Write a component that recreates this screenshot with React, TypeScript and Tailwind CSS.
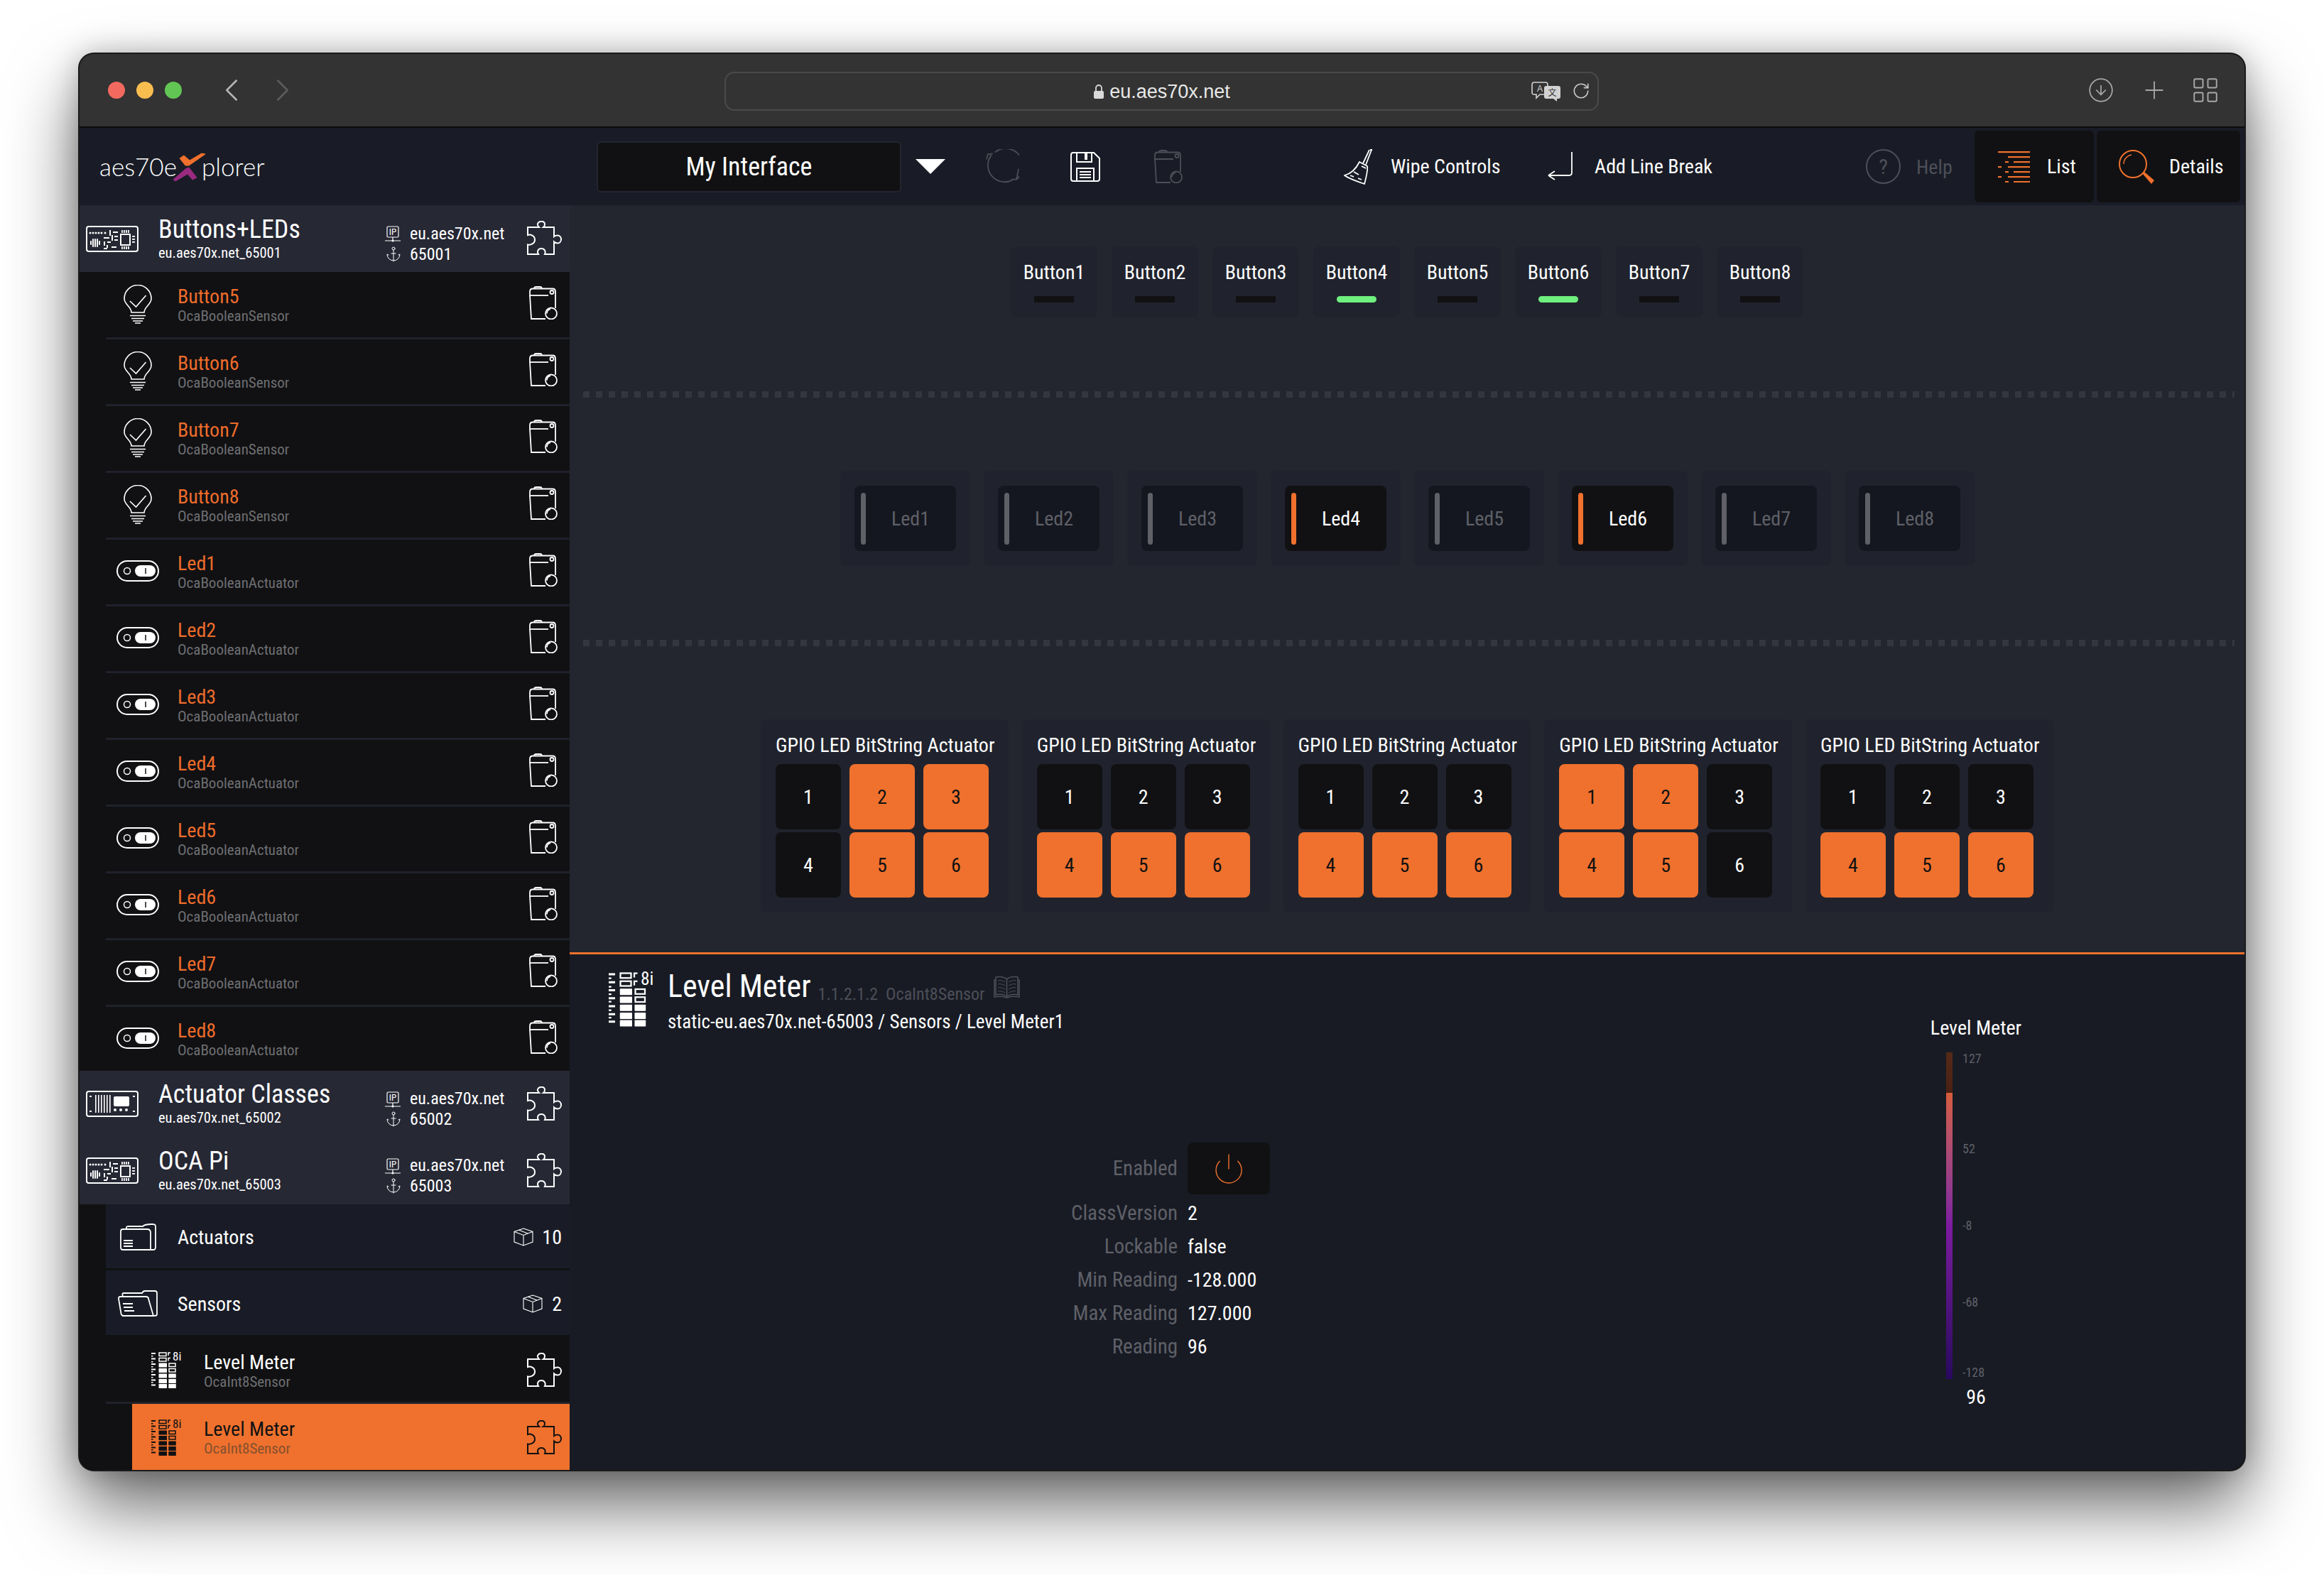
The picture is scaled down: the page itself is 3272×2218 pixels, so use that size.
import { ChevronLeft, ChevronRight, CircleArrowDown, Plus, LayoutGrid, RotateCw, Anchor, Power } from 'lucide-react';

const buttons = ['Button1', 'Button2', 'Button3', 'Button4', 'Button5', 'Button6', 'Button7', 'Button8'];
const leds = ['Led1', 'Led2', 'Led3', 'Led4', 'Led5', 'Led6', 'Led7', 'Led8'];
const gpio = [
  [false, true, true, false, true, true],
  [false, false, false, true, true, true],
  [false, false, false, true, true, true],
  [true, true, false, true, true, false],
  [false, false, false, true, true, true],
];
const rows = [
  { name: 'Button5', type: 'OcaBooleanSensor', kind: 'bulb' },
  { name: 'Button6', type: 'OcaBooleanSensor', kind: 'bulb' },
  { name: 'Button7', type: 'OcaBooleanSensor', kind: 'bulb' },
  { name: 'Button8', type: 'OcaBooleanSensor', kind: 'bulb' },
  { name: 'Led1', type: 'OcaBooleanActuator', kind: 'toggle' },
  { name: 'Led2', type: 'OcaBooleanActuator', kind: 'toggle' },
  { name: 'Led3', type: 'OcaBooleanActuator', kind: 'toggle' },
  { name: 'Led4', type: 'OcaBooleanActuator', kind: 'toggle' },
  { name: 'Led5', type: 'OcaBooleanActuator', kind: 'toggle' },
  { name: 'Led6', type: 'OcaBooleanActuator', kind: 'toggle' },
  { name: 'Led7', type: 'OcaBooleanActuator', kind: 'toggle' },
  { name: 'Led8', type: 'OcaBooleanActuator', kind: 'toggle' },
];
const detailProps = [
  ['ClassVersion', '2'],
  ['Lockable', 'false'],
  ['Min Reading', '-128.000'],
  ['Max Reading', '127.000'],
  ['Reading', '96'],
];
// short dash / long dash of the list tab icon, one entry per line
const listLines = [
  [[0, 45]],
  [[14, 45]],
  [[10, 15], [22, 45]],
  [[0, 5], [14, 45]],
  [[10, 15], [22, 45]],
  [[0, 5], [14, 45]],
  [[10, 15], [22, 45]],
];

function Puzzle({ className = 'text-white' }: { className?: string }) {
  return (
    <svg viewBox="0 0 49 48" className={`w-[49px] h-[48px] shrink-0 ${className}`} fill="none" stroke="currentColor" strokeWidth="2">
      <path d="M1 9H17C15 7 14.500 5.500 15 4C16 1.500 18 .8 20 .8C23 .8 25 2.500 25 5C25 6.500 24.500 8 23 9H38V22C39.500 20.500 41 20.500 43 20.500C46 20.500 48 23 48 26C48 29 46 31.500 43 31.500C41 31.500 39.500 31 38 29.500V47H25C26.500 44 25.500 39 20 39C15 39 14 44 16 47H1V33.500C5 34.500 11 32 11 26.500C11 21 5 18.500 1 20Z" />
    </svg>
  );
}

function Bin({ className = 'text-white' }: { className?: string }) {
  return (
    <svg viewBox="0 0 41 47" className={`w-[41px] h-[47px] shrink-0 ${className}`} fill="none" stroke="currentColor" strokeWidth="1.800">
      <path d="M8 3.500C8 1.500 9 1 11 1H16C18 1 19 1.500 19 3.500" />
      <path d="M2 12V8C2 5 3 3.500 6 3.500H34C37 3.500 38 5 38 8V31" />
      <circle cx="33" cy="8.500" r="2.500" />
      <path d="M1 13H28" />
      <path d="M2 13L4 46H24" />
      <circle cx="32" cy="38.500" r="8" />
      <path d="M26 38.500C26 35 28.500 32.500 31 32" />
    </svg>
  );
}

function Bulb() {
  return (
    <svg viewBox="0 0 40 55" className="w-[40px] h-[55px]" fill="none" stroke="white" strokeWidth="1.600">
      <path d="M11 39C11 31 1 28 1 19.500A19 19 0 0 1 39 19.500C39 28 29 31 29 39Z" />
      <path d="M9 23L17.500 31L31.500 15" />
      <path d="M9 43.500H31M11 47.500H29M13 51H27M16 54H24" />
    </svg>
  );
}

function Toggle() {
  return (
    <svg viewBox="0 0 60 30" className="w-[60px] h-[30px]" fill="none" stroke="white" strokeWidth="2">
      <rect x="1" y="1" width="58" height="28" rx="14" />
      <circle cx="15" cy="15" r="4.500" strokeWidth="1.500" />
      <rect x="26" y="7" width="29" height="16" rx="8" fill="white" stroke="none" />
      <path d="M41 11V19" stroke="#111113" strokeWidth="1.500" />
    </svg>
  );
}

function ChipIcon() {
  const top = [6, 10, 14, 18, 22, 27];
  return (
    <svg viewBox="0 0 74 37" className="w-[74px] h-[37px] shrink-0" fill="white">
      <rect x="1" y="1" width="72" height="35" rx="3" fill="none" stroke="white" strokeWidth="2" />
      {top.map(x => <circle key={x} cx={x} cy="10" r="1.500" />)}
      <rect x="33" y="6" width="2" height="8" />
      <rect x="38" y="8" width="7" height="2" />
      <rect x="25" y="16" width="8" height="2" />
      <rect x="36" y="13" width="2" height="8" />
      <rect x="40" y="14" width="5" height="2" />
      <rect x="40" y="19" width="5" height="2" />
      <rect x="49" y="12" width="13" height="15" fill="none" stroke="white" strokeWidth="2" />
      {[50, 53, 56, 59].map(x => <rect key={x} x={x} y="6" width="1.800" height="4" />)}
      {[50, 53, 56, 59].map(x => <rect key={x} x={x} y="29" width="1.800" height="4" />)}
      {[14, 18, 22].map(y => <rect key={y} x="65" y={y} width="4" height="1.800" />)}
      {[6, 9, 12, 15, 18].map((x, i) => <rect key={x} x={x} y={i % 4 === 0 ? 21 : 18} width="2" height={i % 4 === 0 ? 6 : 12} rx="1" />)}
      <rect x="25" y="22" width="2" height="6" />
      <rect x="30" y="22" width="5" height="2" />
      <rect x="29" y="27" width="2" height="4" />
      <rect x="25" y="31" width="5" height="2" />
      <rect x="36" y="29" width="7" height="2" />
    </svg>
  );
}

function RackIcon() {
  return (
    <svg viewBox="0 0 74 37" className="w-[74px] h-[37px] shrink-0" fill="white">
      <rect x="1" y="1" width="72" height="35" rx="3" fill="none" stroke="white" strokeWidth="2" />
      {[13, 17, 21, 25, 29, 33].map(x => <rect key={x} x={x} y="6" width="1.600" height="25" />)}
      <rect x="39" y="8" width="22" height="14" rx="2" />
      {[41, 49, 57].map(x => <circle key={x} cx={x} cy="27" r="2" />)}
      <rect x="5" y="7" width="3" height="2" />
      <rect x="5" y="28" width="3" height="2" />
      <rect x="66" y="7" width="3" height="2" />
      <rect x="66" y="28" width="3" height="2" />
    </svg>
  );
}

function IpIcon() {
  return (
    <svg viewBox="0 0 22 23" className="w-[22px] h-[23px] overflow-visible" fill="none" stroke="white" strokeWidth="1.200">
      <rect x="3" y="1" width="16" height="15" rx="1.500" />
      <text x="11" y="13" textAnchor="middle" fontSize="13" fill="white" stroke="none" fontFamily="Roboto Condensed">IP</text>
      <path d="M0 21H22M11 16V21" />
      <circle cx="11" cy="21" r="1.500" fill="white" stroke="none" />
    </svg>
  );
}

function LevelIcon({ className = 'w-[46px] h-[52px]', fill = 'white' }: { className?: string; fill?: string }) {
  const ys = [2, 9.500, 17, 24.500, 32, 39.500, 46.500];
  return (
    <svg viewBox="0 0 46 52" className={`shrink-0 overflow-visible ${className}`}>
      {ys.map(y => <rect key={y} x="0" y={y} width="6" height="2" fill={fill} />)}
      {[6, 14, 21, 28, 36, 43].map(y => <rect key={y} x="0" y={y} width="2.500" height="1.500" fill={fill} />)}
      {ys.map((y, i) => i < 2
        ? <rect key={y} x="11" y={y} width="10" height="4.500" fill="none" stroke={fill} strokeWidth="1.500" />
        : <rect key={y} x="10.500" y={y - .5} width="11.500" height="6" rx=".5" fill={fill} />)}
      {ys.map((y, i) => {
        if (i < 2) return <path key={y} d={`M27 ${y}H24V${y + 4}`} fill="none" stroke={fill} strokeWidth="1.500" />;
        if (i < 4) return <rect key={y} x="25" y={y} width="9" height="4.500" fill="none" stroke={fill} strokeWidth="1.500" />;
        return <rect key={y} x="24.300" y={y - .5} width="10.500" height="6" rx=".5" fill={fill} />;
      })}
      <text x="30" y="13" fontSize="17" fill={fill} fontFamily="Roboto Condensed">8i</text>
    </svg>
  );
}

function Folder({ open }: { open?: boolean }) {
  if (open) {
    return (
      <svg viewBox="0 0 56 38" className="w-[56px] h-[38px]" fill="none" stroke="white" strokeWidth="1.800">
        <path d="M6 36H51C53 36 55 36 55 34V4C55 2 54 1 52 1H38C36 1 35 2 34 4H8C6 4 6 6 7 8" />
        <path d="M3 9H39C41 9 43 10 43 12L50 36H8C6 36 5 35 4.500 33L1 12C1 10 2 9 3 9Z" />
        <path d="M7 19H21M8 24H21M9 29H23" />
      </svg>
    );
  }
  return (
    <svg viewBox="0 0 51 38" className="w-[51px] h-[38px]" fill="none" stroke="white" strokeWidth="1.800">
      <path d="M4 8H38C41 8 43 10 43 13V37H4C2 37 1 36 1 34V11C1 9 2 8 4 8Z" />
      <path d="M9 7V6C9 4 10 4 12 4H32C34 2 38 1 44 1C47 1 50 .5 50 4V33C50 35 50 37 47 37H43" />
      <path d="M5 24H18M5 28H18M5 32H18" />
    </svg>
  );
}

function Box() {
  return (
    <svg viewBox="0 0 28 26" className="w-[28px] h-[26px]" fill="none" stroke="white" strokeWidth="1.100">
      <path d="M14 1L27 5.500V20L14 25L1 20V5.500ZM1 5.500L14 10.500L27 5.500M14 10.500V25M7 3L20 8" />
    </svg>
  );
}

function DeviceHeader({ name, id, port, icon }: { name: string; id: string; port: string; icon: 'chip' | 'rack' }) {
  return (
    <div className="h-[94px] bg-[#262834] flex items-center pl-[9px] pr-[11px] text-white">
      {icon === 'chip' ? <ChipIcon /> : <RackIcon />}
      <div className="ml-[28px] w-[319px]">
        <div className="text-[36px] leading-[38px]">{name}</div>
        <div className="text-[20.500px] leading-[26px] mt-[1px]">{id}</div>
      </div>
      <div className="w-[200px] flex flex-col mt-[14px]">
        <div className="flex items-center h-[29px]">
          <div className="w-[35px] pt-[2px]"><IpIcon /></div>
          <span className="text-[24px]">eu.aes70x.net</span>
        </div>
        <div className="flex items-center h-[29px]">
          <Anchor className="w-[24px] h-[24px] mr-[11px]" strokeWidth={1} />
          <span className="text-[24px]">{port}</span>
        </div>
      </div>
      <div className="ml-auto mb-[2px]"><Puzzle /></div>
    </div>
  );
}

function Sidebar() {
  return (
    <div className="w-[690px] shrink-0 flex flex-col bg-[#111113]">
      <div className="h-[95px]"><DeviceHeader name="Buttons+LEDs" id="eu.aes70x.net_65001" port="65001" icon="chip" /></div>
      <div className="h-[1123.500px] overflow-hidden pl-[37px] flex flex-col">
        {rows.map(r => (
          <div key={r.name} className="h-[94px] shrink-0 flex items-center border-b-[3px] border-[#1f212b]">
            <div className="w-[90px] flex justify-center pb-[3px]">{r.kind === 'bulb' ? <Bulb /> : <Toggle />}</div>
            <div className="ml-[11px] flex-1 pt-[2px]">
              <div className="text-[28px] leading-[30px] text-[#ee6c2b]">{r.name}</div>
              <div className="text-[21px] leading-[25px] text-[#6e6f72]">{r.type}</div>
            </div>
            <div className="pr-[17px] pb-[6px]"><Bin /></div>
          </div>
        ))}
      </div>
      <DeviceHeader name="Actuator Classes" id="eu.aes70x.net_65002" port="65002" icon="rack" />
      <DeviceHeader name="OCA Pi" id="eu.aes70x.net_65003" port="65003" icon="chip" />
      <div className="pl-[37px] flex flex-col flex-1">
        <div className="h-[93.500px] bg-[#191c26] shadow-[inset_0_-3px_0_#111113] flex items-center text-white">
          <div className="w-[90px] flex justify-center"><Folder /></div>
          <span className="ml-[11px] text-[28px] flex-1 pt-[2px]">Actuators</span>
          <Box />
          <span className="ml-[12px] mr-[11px] text-[28px] pt-[2px]">10</span>
        </div>
        <div className="h-[94px] bg-[#191c26] shadow-[inset_0_-3px_0_#111113] flex items-center text-white">
          <div className="w-[90px] flex justify-center"><Folder open /></div>
          <span className="ml-[11px] text-[28px] flex-1 pt-[2px]">Sensors</span>
          <Box />
          <span className="ml-[13px] mr-[11px] text-[28px] pt-[2px]">2</span>
        </div>
        <div className="h-[94px] border-b-[3px] border-[#1f212b] flex items-center text-white pl-[64px] pr-[11px]">
          <LevelIcon />
          <div className="ml-[28px] flex-1 pt-[5px]">
            <div className="text-[28px] leading-[30px]">Level Meter</div>
            <div className="text-[21px] leading-[25px] text-[#6e6f72]">OcaInt8Sensor</div>
          </div>
          <Puzzle />
        </div>
        <div className="flex-1 ml-[37px] bg-[#ef712d] flex items-center pl-[27px] pr-[11px] text-[#111113]">
          <LevelIcon fill="#111113" />
          <div className="ml-[28px] flex-1 pt-[3px]">
            <div className="text-[28px] leading-[30px]">Level Meter</div>
            <div className="text-[21px] leading-[25px] text-[#85502f]">OcaInt8Sensor</div>
          </div>
          <Puzzle className="text-[#111113]" />
        </div>
      </div>
    </div>
  );
}

function Dots() {
  return (
    <div className="ml-[19px] mr-[14px] h-[9px] bg-[repeating-linear-gradient(90deg,#34363f_0,#34363f_9px,transparent_9px,transparent_18px)]" />
  );
}

function Workspace() {
  return (
    <div className="h-[1052px] shrink-0 bg-[#23262f] pt-[58px] flex flex-col">
      <div className="flex justify-center gap-[20px]">
        {buttons.map((b, i) => (
          <div key={b} className="w-[122px] h-[100px] rounded-[8px] bg-[#20232d] flex flex-col items-center pt-[22px]">
            <span className="text-[28px] leading-[30px] text-white">{b}</span>
            <div className={`mt-[18px] w-[56px] h-[9px] ${i === 3 || i === 5 ? 'bg-[#6ff07f] rounded-full' : 'bg-[#111113]'}`} />
          </div>
        ))}
      </div>
      <div className="mt-[104px]"><Dots /></div>
      <div className="mt-[103px] flex justify-center gap-[19px]">
        {leds.map((l, i) => {
          const on = i === 3 || i === 5;
          return (
            <div key={l} className="w-[183px] h-[134px] rounded-[8px] bg-[#20232d] flex items-center justify-center">
              <div className={`w-[143px] h-[92px] rounded-[8px] flex items-center pl-[9px] ${on ? 'bg-[#111113]' : 'bg-[#14171f]'}`}>
                <div className={`w-[7px] h-[73px] rounded-full ${on ? 'bg-[#ef712d]' : 'bg-[#5f6068]'}`} />
                <span className={`flex-1 text-center text-[28px] pt-[2px] ${on ? 'text-white' : 'text-[#5f6068]'}`}>{l}</span>
              </div>
            </div>
          );
        })}
      </div>
      <div className="mt-[104px]"><Dots /></div>
      <div className="mt-[103px] flex justify-center gap-[18.750px]">
        {gpio.map((bits, n) => (
          <div key={n} className="w-[349px] h-[272px] rounded-[8px] bg-[#20232d] pl-[21px] pt-[22px]">
            <div className="text-[28px] leading-[30px] whitespace-nowrap text-white">GPIO LED BitString Actuator</div>
            <div className="mt-[11px] grid grid-cols-[92px_92px_92px] auto-rows-[92px] gap-x-[12px] gap-y-[4px]">
              {bits.map((on, i) => (
                <div key={i} className={`rounded-[8px] flex items-center justify-center text-[28px] pt-[2px] ${on ? 'bg-[#ef712d] text-[#111113]' : 'bg-[#111113] text-white'}`}>{i + 1}</div>
              ))}
            </div>
          </div>
        ))}
      </div>
    </div>
  );
}

function Details() {
  return (
    <div className="flex-1 bg-[#181b24] border-t-[3px] border-[#ef712d] flex">
      <div className="flex-1 flex flex-col">
        <div className="pl-[55px] pt-[22px] flex text-white">
          <LevelIcon className="w-[69px] h-[81px]" />
          <div className="ml-[14px]">
            <div className="flex items-start">
              <span className="text-[44px] leading-[46px]">Level Meter</span>
              <span className="ml-[10px] mt-[19px] text-[24px] leading-[30px] text-[#4d4f58]">1.1.2.1.2&nbsp; OcaInt8Sensor</span>
              <svg viewBox="0 0 37 32" className="ml-[13px] mt-[8px] w-[37px] h-[32px]" fill="none" stroke="#4d4f58" strokeWidth="1.500">
                <path d="M18.500 5C14 1 8 1 3 2V27C8 26 14 26 18.500 29C23 26 29 26 34 27V2C29 1 23 1 18.500 5ZM18.500 5V29M3 6H1V30C8 29 14 29 18.500 31C23 29 29 29 36 30V6H34" />
                <path d="M6 7C9 6 12 7 16 9M6 12C9 11 12 12 16 14M6 17C9 16 12 17 16 19M6 22C9 21 12 22 16 24M31 7C28 6 25 7 21 9M31 12C28 11 25 12 21 14M31 17C28 16 25 17 21 19M31 22C28 21 25 22 21 24" strokeWidth="1" />
              </svg>
            </div>
            <div className="text-[27px] leading-[34px] mt-[7px]">static-eu.aes70x.net-65003 / Sensors / Level Meter1</div>
          </div>
        </div>
        <div className="mt-[153px] flex items-center gap-x-[14px]">
          <span className="w-[856px] text-right text-[29px] text-[#5f6068]">Enabled</span>
          <div className="w-[116px] h-[73px] rounded-[8px] bg-[#111113] flex items-center justify-center text-[#ef712d]">
            <Power className="w-[48px] h-[48px]" strokeWidth={0.7} />
          </div>
        </div>
        <div className="mt-[3px] flex flex-col">
          {detailProps.map(([k, v]) => (
            <div key={k} className="h-[47px] flex items-center gap-x-[14px]">
              <span className="w-[856px] text-right text-[29px] text-[#5f6068]">{k}</span>
              <span className="text-[28px] text-white">{v}</span>
            </div>
          ))}
        </div>
      </div>
      <div className="w-[200px] mr-[278px] pt-[89px] flex flex-col text-white">
        <div className="text-[28px] leading-[30px] text-center">Level Meter</div>
        <div className="mt-[19px] pl-[58px] flex">
          <div className="w-[9px] h-[460px] flex flex-col">
            <div className="h-[57px] bg-linear-to-b from-[#552a17] to-[#4a2114]" />
            <div className="flex-1 bg-linear-to-b from-[#d65c3a] via-[#7e1ba0] via-46% to-[#29085f]" />
          </div>
          <div className="ml-[14px] flex flex-col text-[18px] leading-[20px] text-[#5f6068]">
            <span className="mt-[-1px]">127</span>
            <span className="mt-[107px]">52</span>
            <span className="mt-[88px]">-8</span>
            <span className="mt-[88px]">-68</span>
            <span className="mt-[79px]">-128</span>
          </div>
        </div>
        <div className="mt-[10px] text-[28px] leading-[30px] text-center">96</div>
      </div>
    </div>
  );
}

function BrowserBar() {
  return (
    <div className="h-[104px] shrink-0 bg-[#333333] border-b-[2px] border-[#0c0c0c] flex items-center text-[#a8a8a8]">
      <div className="ml-[40px] flex gap-[16px]">
        <div className="w-[24px] h-[24px] rounded-full bg-[#f26a5f]" />
        <div className="w-[24px] h-[24px] rounded-full bg-[#f7bd4f]" />
        <div className="w-[24px] h-[24px] rounded-full bg-[#62c654]" />
      </div>
      <ChevronLeft className="ml-[43px] w-[54px] h-[54px] text-[#b5b5b5]" strokeWidth={1.100} />
      <ChevronRight className="ml-[18px] w-[54px] h-[54px] text-[#5d5d5d]" strokeWidth={1.100} />
      <div className="ml-[595px] w-[1231px] h-[55px] rounded-[14px] border-[2px] border-[#4a4a4a] flex items-center justify-center relative mt-[2px]">
        <svg viewBox="0 0 16 22" className="w-[16px] h-[22px] mr-[7px] mt-[2px]" fill="#d9d9d9">
          <path d="M4 10V6a4 4 0 0 1 8 0v4" fill="none" stroke="#d9d9d9" strokeWidth="1.800" />
          <rect x="1" y="10" width="14" height="11" rx="2" />
        </svg>
        <span className="font-['Liberation_Sans',sans-serif] text-[27px] text-[#e8e8e8] mt-[2px]">eu.aes70x.net</span>
        <svg viewBox="0 0 40 28" className="absolute right-[52px] top-[12px] w-[40px] h-[28px] overflow-visible">
          <path d="M3 1H19C21 1 22 2 22 4V15C22 17 21 18 19 18H11L6 23V18H3C1 18 0 17 0 15V4C0 2 1 1 3 1Z" fill="#333333" stroke="#d2d2d2" strokeWidth="1.600" />
          <text x="11" y="14" textAnchor="middle" fontSize="12" fill="#d2d2d2" fontFamily="Liberation Sans">A</text>
          <path d="M20 6H37C39 6 40 7 40 9V21C40 23 39 24 37 24H35V28L30 24H20C18 24 17 23 17 21V9C17 7 18 6 20 6Z" fill="#d2d2d2" />
          <text x="28.500" y="20" textAnchor="middle" fontSize="12" fill="#333333" fontFamily="Noto Sans CJK SC">文</text>
        </svg>
        <RotateCw className="absolute right-[10px] top-[12px] w-[26px] h-[26px] text-[#c8c8c8]" strokeWidth={1.500} />
      </div>
      <CircleArrowDown className="ml-[688px] w-[38px] h-[38px]" strokeWidth={1.100} />
      <Plus className="ml-[36px] w-[40px] h-[40px]" strokeWidth={1.100} />
      <LayoutGrid className="ml-[31px] w-[42px] h-[42px]" strokeWidth={1.100} />
    </div>
  );
}

function AppHeader() {
  return (
    <div className="h-[109px] shrink-0 bg-[#191c26] flex items-center text-white">
      <div className="ml-[28px] w-[230px] flex items-center font-['Lato',sans-serif] font-light text-[35px] leading-none">
        <span>aes70e</span>
        <svg viewBox="0 0 46 41" className="w-[46px] h-[41px] -ml-[5px] shrink-0 mt-[2px]">
          <path d="M9 8L15 4L23 11L40 1L45 2L22 18L17 18Z" fill="#ef712d" stroke="#ef712d" strokeLinejoin="round" />
          <path d="M0 38L17 23L22 21L33 35L27 38L20 30L3 40Z" fill="#9a2a80" stroke="#9a2a80" strokeLinejoin="round" />
        </svg>
        <span className="ml-[-6px] relative">plorer</span>
      </div>
      <div className="ml-[470px] w-[429px] h-[72px] rounded-[6px] bg-[#111113] border-[2px] border-[#23262f] flex items-center justify-center text-[36px]">My Interface</div>
      <svg viewBox="0 0 42 21" className="ml-[20px] w-[42px] h-[21px]" fill="white"><path d="M0 0H42L21 21Z" /></svg>
      <svg viewBox="0 0 48 50" className="ml-[57px] w-[47px] h-[50px]" fill="none" stroke="#4d4f58" strokeWidth="1.800">
        <path d="M8 8A24 24 0 0 0 38 44M13 4A24 24 0 0 1 44 43" />
        <path d="M1 14L3 7L10 6M47 28L44 43L37 43" />
      </svg>
      <svg viewBox="0 0 42 42" className="ml-[72px] w-[42px] h-[42px]" fill="none" stroke="white" strokeWidth="2">
        <path d="M4 1H33L41 9V38C41 40 40 41 38 41H4C2 41 1 40 1 38V4C1 2 2 1 4 1Z" />
        <path d="M9 1V14H30V1" />
        <rect x="20" y="2" width="4" height="9" fill="white" stroke="none" />
        <path d="M9 41V23H33V41M13 28H29M13 32H29M13 36H29" />
      </svg>
      <div className="ml-[75px]"><Bin className="text-[#4d4f58]" /></div>
      <svg viewBox="0 0 41 50" className="ml-[227px] w-[41px] h-[50px]" fill="none" stroke="white" strokeWidth="1.800">
        <path d="M39 1L31 22M36 1L27 20M40 1L37 1" />
        <path d="M22 18L33 24C34 30 32 38 29 49C20 46 8 42 1 37C9 35 17 28 22 18Z" />
        <path d="M25 24L31 27M9 37L14 39M14 32L21 36M20 41L25 43" />
      </svg>
      <span className="ml-[25px] w-[154px] text-[28px] whitespace-nowrap pt-[1px]">Wipe Controls</span>
      <svg viewBox="0 0 37 44" className="ml-[66px] w-[37px] h-[44px]" fill="none" stroke="white" strokeWidth="1.800">
        <path d="M35 1V30C35 33 34 34 31 34H2M2 34L11 28M2 34L11 40" />
      </svg>
      <span className="ml-[30px] w-[165px] text-[28px] whitespace-nowrap pt-[1px]">Add Line Break</span>
      <div className="ml-[217px] w-[49px] h-[49px] rounded-full border-[2px] border-[#4d4f58] flex items-center justify-center text-[30px] text-[#4d4f58]">?</div>
      <span className="ml-[22px] w-[51px] text-[28px] text-[#4d4f58] mt-[3px]">Help</span>
      <div className="ml-[31px] w-[168px] h-[101px] rounded-[6px] bg-[#111113] flex items-center pl-[33px]">
        <svg viewBox="0 0 45 44" className="w-[45px] h-[44px]" fill="#ef712d">
          {listLines.map((parts, i) => parts.map(([a, b]) => (
            <rect key={`${i}-${a}`} x={a} y={i * 7} width={b - a} height="2.200" />
          )))}
        </svg>
        <span className="ml-[24px] text-[28px]">List</span>
      </div>
      <div className="ml-[4px] w-[202px] h-[101px] rounded-[6px] bg-[#111113] flex items-center pl-[30px]">
        <svg viewBox="0 0 52 48" className="w-[52px] h-[48px]" fill="none" stroke="#ef712d" strokeWidth="2">
          <circle cx="21" cy="20" r="19" />
          <path d="M8 20C8 13 13 8 19 7" strokeWidth="1.500" />
          <path d="M34 33L37 31L51 43L47 48Z" fill="#ef712d" stroke="none" />
        </svg>
        <span className="ml-[20px] text-[28px]">Details</span>
      </div>
    </div>
  );
}

export default function App() {
  return (
    <div className="w-[3272px] h-[2218px] bg-white overflow-hidden pt-[76px] pl-[112px] font-['Roboto_Condensed',sans-serif]">
      <div className="w-[3048px] h-[1994px] rounded-[20px] overflow-hidden bg-[#111113] flex flex-col shadow-[0_0_0_2px_#1a1a1a,0_50px_100px_rgba(0,0,0,0.6),0_0_40px_rgba(0,0,0,0.25)]">
        <BrowserBar />
        <AppHeader />
        <div className="flex-1 flex min-h-0">
          <Sidebar />
          <div className="flex-1 flex flex-col min-w-0">
            <Workspace />
            <Details />
          </div>
        </div>
      </div>
    </div>
  );
}
